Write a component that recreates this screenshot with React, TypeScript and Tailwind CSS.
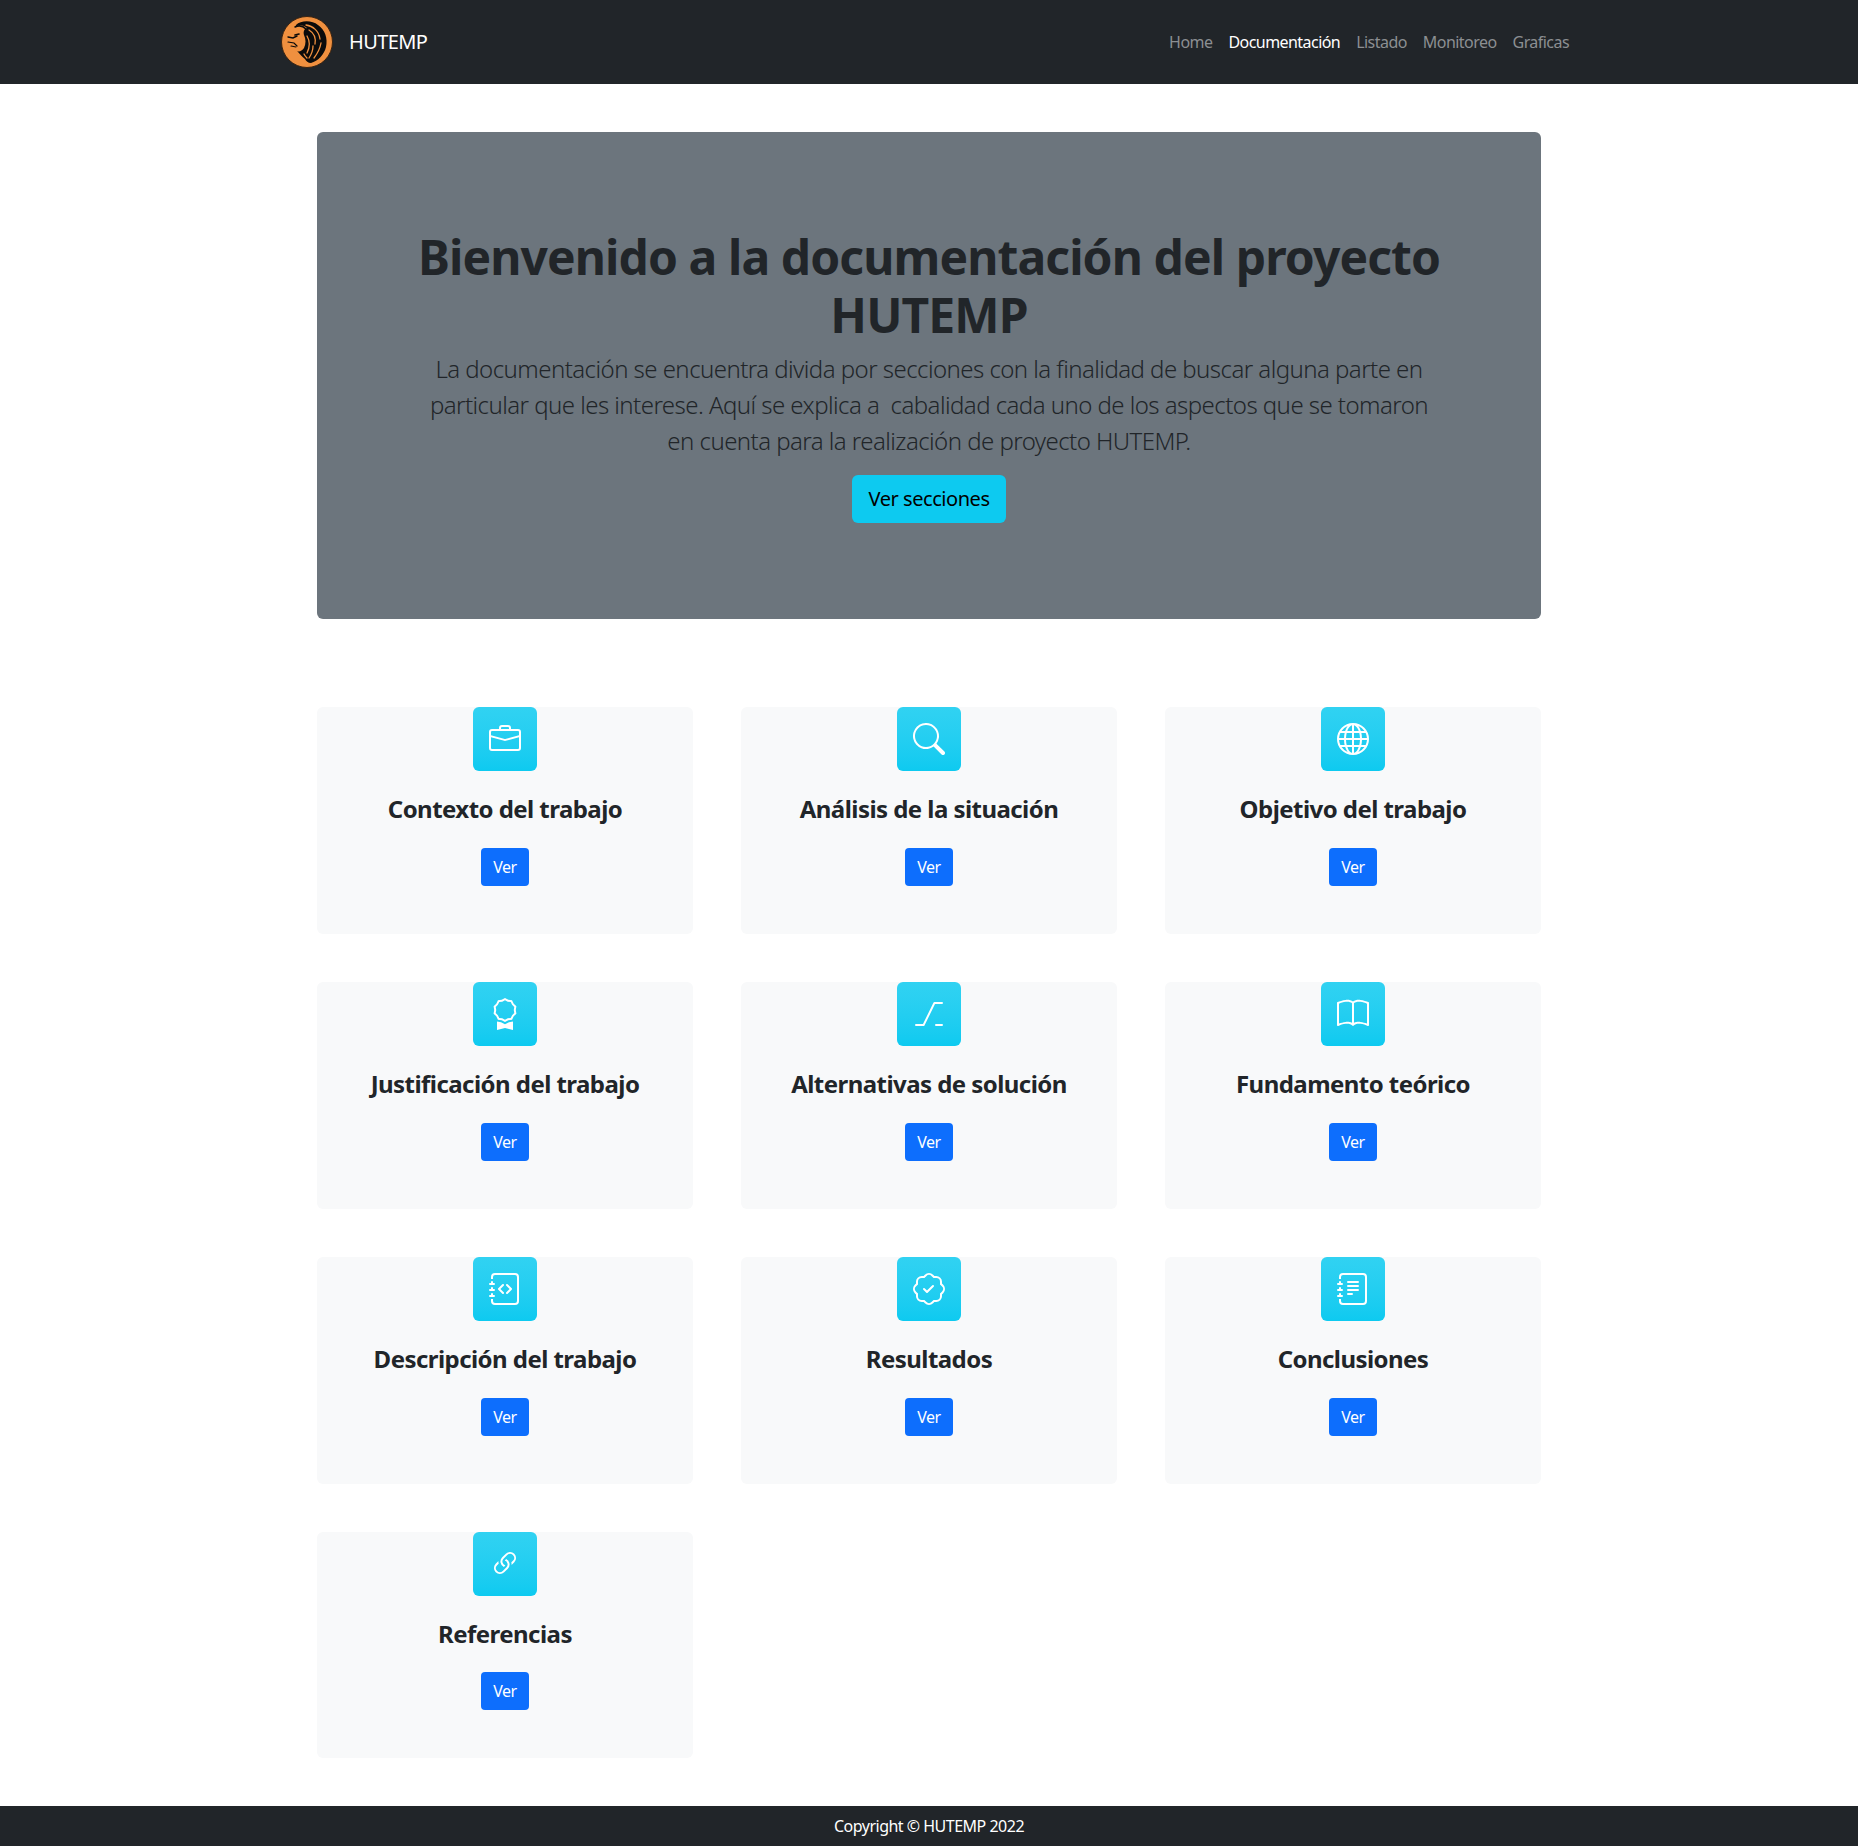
import React from "react";
import { BsBriefcase, BsSearch, BsGlobe, BsAward, BsAlt, BsBook, BsJournalCode, BsPatchCheck, BsJournalText, BsLink45Deg } from "react-icons/bs";

const font = "font-['Noto_Sans','Open_Sans',sans-serif]";

function Logo() {
  return (
    <svg width="52" height="52" viewBox="0 0 52 52" className="shrink-0">
      <circle cx="26" cy="26" r="25.5" fill="#f0903f" stroke="#3a2412" strokeWidth="1" />
      <path d="M15 9 C20 4 31 4 37 9 C44 14 47 22 45 31 C43 39 37 45 30 47 C27 47 25 45 24 43 C21 41 19 38 17 36 L15 33 L19 28 L19 20 L14 14 Z" fill="#0b0b0b" />
      <path d="M14 11 C18 8 23 9 26 12 C23 13 22 16 23 19 C25 23 25 28 23 32 C21 35 18 36 16 35 C14 34 12 33 11 33 C10 31 10 29 10 28 C8 28 6 27 6 25 C6 23 6 22 7 21 L12 16 Z" fill="#f0903f" />
      <g fill="none" stroke="#0b0b0b" strokeLinecap="round">
        <path d="M7 21 L12 22 L16 20" strokeWidth="1.4" />
        <path d="M14 19 L18 18" strokeWidth="1.6" />
        <path d="M7 26 L13 27 L16 30" strokeWidth="1.2" />
        <path d="M10 30 L15 31" strokeWidth="1.1" />
        <path d="M14 11 C18 9 22 10 25 13" strokeWidth="1.5" />
      </g>
      <g fill="none" stroke="#f0903f" strokeLinecap="round" strokeWidth="1.3">
        <path d="M25 9 C32 10 38 15 39 23" />
        <path d="M28 14 C33 17 35 22 34 28" />
        <path d="M26 20 C29 25 29 31 26 37" />
        <path d="M32 30 C32 35 30 39 28 42" />
        <path d="M40 27 C39 33 36 38 33 42" />
        <path d="M23 38 C24 40 25 41 26 42" />
      </g>
    </svg>
  );
}

const sections = [
  { title: "Contexto del trabajo", Icon: BsBriefcase },
  { title: "Análisis de la situación", Icon: BsSearch },
  { title: "Objetivo del trabajo", Icon: BsGlobe },
  { title: "Justificación del trabajo", Icon: BsAward },
  { title: "Alternativas de solución", Icon: BsAlt },
  { title: "Fundamento teórico", Icon: BsBook },
  { title: "Descripción del trabajo", Icon: BsJournalCode },
  { title: "Resultados", Icon: BsPatchCheck },
  { title: "Conclusiones", Icon: BsJournalText },
  { title: "Referencias", Icon: BsLink45Deg },
];

const links = ["Home", "Documentación", "Listado", "Monitoreo", "Graficas"];

export default function App() {
  return (
    <div className={`${font} bg-white text-[#212529] min-h-[1846px] flex flex-col`}>
      <nav className="bg-[#212529] h-[84px] flex items-center">
        <div className="w-[1320px] mx-auto px-3 flex items-center justify-between">
          <div className="flex items-center gap-4">
            <Logo />
            <span className="text-white text-[20px] tracking-[-0.6px]">HUTEMP</span>
          </div>
          <ul className="flex mr-0">
            {links.map((l) => (
              <li key={l} className={`px-2 text-[16px] tracking-[-0.55px] ${l === "Documentación" ? "text-white" : "text-[#8c8f92]"}`}>
                {l}
              </li>
            ))}
          </ul>
        </div>
      </nav>

      <main className="w-[1224px] mx-auto">
        <section className="mt-12 bg-[#6c757d] rounded-md py-24 flex flex-col items-center text-center">
          <h1 className="text-[48px] leading-[1.2] font-bold mb-2 tracking-[-0.9px] w-[1100px]">
            Bienvenido a la documentación del proyecto HUTEMP
          </h1>
          <p className="text-[24px] leading-[1.5] font-light tracking-[-0.55px] mb-4">
            <span className="block whitespace-nowrap">La documentación se encuentra divida por secciones con la finalidad de buscar alguna parte en</span>
            <span className="block whitespace-nowrap">particular que les interese. Aquí se explica a&nbsp; cabalidad cada uno de los aspectos que se tomaron</span>
            <span className="block whitespace-nowrap">en cuenta para la realización de proyecto HUTEMP.</span>
          </p>
          <button className="bg-[#0dcaf0] text-black text-[20px] h-12 px-4 rounded-md tracking-[-0.45px]">Ver secciones</button>
        </section>

        <section className="mt-[88px] grid grid-cols-3 gap-12">
          {sections.map(({ title, Icon }) => (
            <div key={title} className="bg-[#f8f9fa] rounded-md h-[226.8px] flex flex-col items-center text-center">
              <div className="w-16 h-16 rounded-md bg-gradient-to-b from-[#31d2f2] to-[#0dcaf0] flex items-center justify-center text-white">
                <Icon size={32} />
              </div>
              <h3 className="mt-6 mb-6 text-[24px] leading-[1.2] font-bold tracking-[-0.55px]">{title}</h3>
              <button className="bg-[#0d6efd] text-white text-[16px] h-[38px] w-12 rounded tracking-[-0.5px]">Ver</button>
            </div>
          ))}
        </section>
      </main>

      <footer className="mt-12 bg-[#212529] text-white text-center text-[16px] leading-6 py-2 tracking-[-0.5px]">
        Copyright © HUTEMP 2022
      </footer>
    </div>
  );
}
